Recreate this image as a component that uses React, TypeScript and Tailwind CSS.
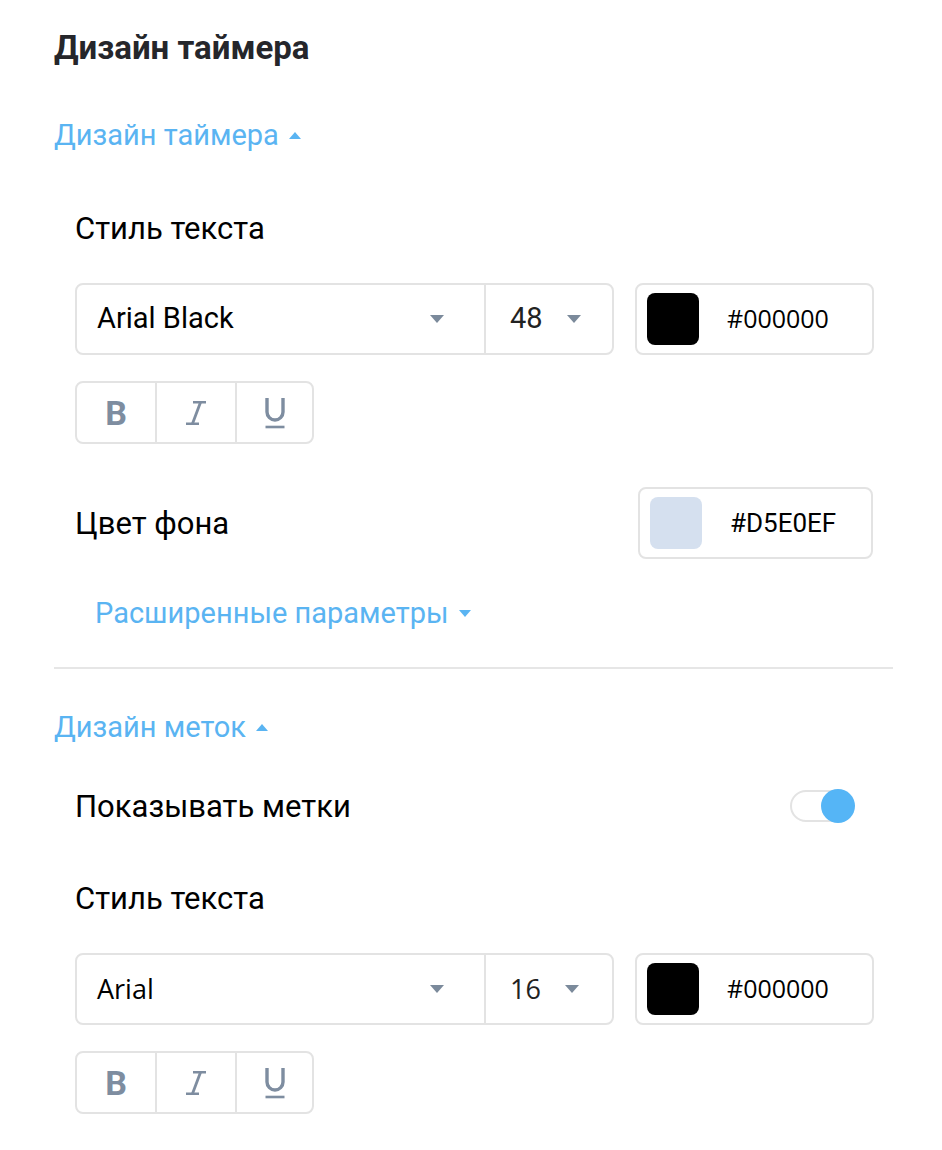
import React from "react";

const Caret = ({ up = false, className = "" }: { up?: boolean; className?: string }) => (
  <svg viewBox="0 0 14 8" className={className}>
    {up ? <path d="M0 8 L7 0 L14 8 Z" fill="currentColor" /> : <path d="M0 0 L14 0 L7 8 Z" fill="currentColor" />}
  </svg>
);

const BlueToggle = ({ label, up, className = "" }: { label: string; up: boolean; className?: string }) => (
  <div className={`h-[34px] flex items-center gap-[10px] text-[29px] text-[#5ab4f2] leading-none ${className}`}>
    <span>{label}</span>
    <Caret up={up} className="w-[12px] h-[7px]" />
  </div>
);

const ColorBox = ({ color, hex, fontClass, className = "" }: { color: string; hex: string; fontClass: string; className?: string }) => (
  <div className={`h-[72px] border-2 border-[#e3e3e3] rounded-[8px] flex items-center pl-[10px] ${className}`}>
    <div className="w-[52px] h-[52px] rounded-[8px]" style={{ background: color }} />
    <span className={`ml-[28px] text-black ${fontClass}`}>{hex}</span>
  </div>
);

const FontRow = ({ font, size, fontClass }: { font: string; size: string; fontClass: string }) => (
  <div className="flex gap-[21px]">
    <div className="w-[539px] h-[72px] border-2 border-[#e3e3e3] rounded-[8px] flex">
      <div className="w-[409px] flex items-center justify-between pl-[20px] pr-[40px] border-r-2 border-[#e3e3e3]">
        <span className={`text-black ${fontClass}`}>{font}</span>
        <Caret className="w-[14px] h-[8px] text-[#7b8a9b]" />
      </div>
      <div className="flex-1 flex items-center pl-[24px] gap-[24px]">
        <span className={`text-[#222] ${fontClass}`}>{size}</span>
        <Caret className="w-[14px] h-[8px] text-[#7b8a9b]" />
      </div>
    </div>
    <ColorBox color="#000000" hex="#000000" fontClass="text-[25px] font-['Open_Sans',sans-serif]" className="w-[239px]" />
  </div>
);

const BIU = () => (
  <div className="mt-[26px] w-[239px] h-[63px] border-2 border-[#e3e3e3] rounded-[8px] flex text-[#7e8da0]">
    <div className="w-[80px] flex items-center justify-center border-r-2 border-[#e3e3e3] text-[34px] font-bold font-[Roboto] leading-none">
      B
    </div>
    <div className="w-[80px] flex items-center justify-center border-r-2 border-[#e3e3e3]">
      <svg viewBox="0 0 24 26" className="w-[24px] h-[26px]" fill="none" stroke="currentColor">
        <path d="M9 2.2 H22 M2 23.8 H15" strokeWidth="2.6" />
        <path d="M16.5 2.2 L8.5 23.8" strokeWidth="2.8" />
      </svg>
    </div>
    <div className="flex-1 flex items-center justify-center">
      <svg viewBox="0 0 24 34" className="w-[24px] h-[34px]" fill="none" stroke="currentColor">
        <path d="M4 2 V16 a8 8 0 0 0 16 0 V2" strokeWidth="3.4" />
        <path d="M2.5 31 H21.5" strokeWidth="2.6" />
      </svg>
    </div>
  </div>
);

export default function App() {
  return (
    <div className="w-[942px] h-[1150px] bg-white font-[Roboto] px-[54px] pt-[30px]">
      <h1 className="h-[34px] flex items-center text-[33px] font-bold text-[#25262b] leading-none">Дизайн таймера</h1>
      <BlueToggle label="Дизайн таймера" up className="mt-[54px]" />
      <div className="pl-[21px]">
        <div className="mt-[59px] h-[34px] flex items-center text-[31px] text-black leading-none">Стиль текста</div>
        <div className="mt-[38px]">
          <FontRow font="Arial Black" size="48" fontClass="text-[29px] font-[Roboto]" />
        </div>
        <BIU />
        <div className="mt-[43px] flex items-center justify-between pr-[15px]">
          <span className="text-[31px] text-black leading-none">Цвет фона</span>
          <ColorBox color="#D5E0EF" hex="#D5E0EF" fontClass="text-[26px] font-[Roboto]" className="w-[235px]" />
        </div>
        <BlueToggle label="Расширенные параметры" up={false} className="mt-[37px] ml-[20px]" />
      </div>
      <div className="mt-[37px] h-[2px] bg-[#e6e6e6] w-[839px]" />
      <BlueToggle label="Дизайн меток" up className="mt-[41px]" />
      <div className="pl-[21px]">
        <div className="mt-[45px] h-[34px] flex items-center justify-between pr-[33px]">
          <span className="text-[31px] text-black leading-none">Показывать метки</span>
          <div className="relative w-[65px] h-[34px]">
            <div className="absolute left-0 top-[1px] w-[62px] h-[32px] rounded-full border-2 border-[#e3e3e3] bg-white" />
            <div className="absolute right-0 top-0 w-[34px] h-[34px] rounded-full bg-[#55b5f6]" />
          </div>
        </div>
        <div className="mt-[58px] h-[34px] flex items-center text-[31px] text-black leading-none">Стиль текста</div>
        <div className="mt-[38px]">
          <FontRow font="Arial" size="16" fontClass="text-[27px] font-['Open_Sans',sans-serif]" />
        </div>
        <BIU />
      </div>
    </div>
  );
}
